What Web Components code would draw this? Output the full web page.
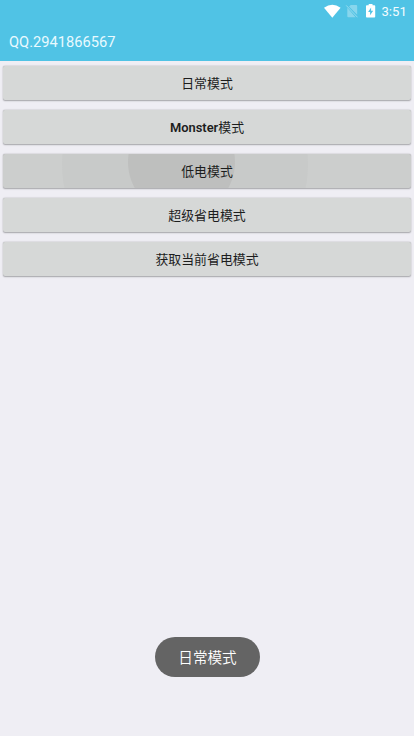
<!DOCTYPE html>
<html lang="zh-CN"><head><meta charset="utf-8"><title>QQ.2941866567</title>
<style>
html,body{margin:0;height:100%;overflow:hidden}
body{background:#efeef4;font-family:Roboto,"Noto Sans CJK SC",sans-serif}
</style></head><body>
<power-app></power-app>
<script>
const define=(name,html)=>customElements.define(name,class extends HTMLElement{
  constructor(){super();this.attachShadow({mode:'open'}).innerHTML=html;}
});
define('status-bar',`<style>
:host{display:flex;height:24px;box-sizing:border-box;justify-content:flex-end;align-items:center;padding-right:7.5px;color:#f4fcff;font-size:13.1px;line-height:24px}
svg{display:block;flex:none}.clock{margin-left:5.5px;width:25px;white-space:nowrap}
</style>
<svg width="52" height="24" viewBox="0 0 52 24">
<path d="M0 7.8Q8.3 1.6 16.6 7.8L8.3 17.8Z" fill="#fff"/>
<g fill="#fff" opacity=".32"><path d="M23.3 7.8V16.2Q23.3 17.2 24.3 17.2H31.6Z"/><path d="M26.8 5H32.2Q33.2 5 33.2 6V14.8L25 6.6Z"/></g>
<path d="M22.2 5.4L33.5 17.3" stroke="#fff" stroke-width=".9" opacity=".45"/>
<path d="M44.7 4H48.5V5.2H50.4Q51.2 5.2 51.2 6V16.7Q51.2 17.5 50.4 17.5H42.8Q42 17.5 42 16.7V6Q42 5.2 42.8 5.2H44.7Z" fill="#fff"/>
<path d="M47.1 7.4L44.1 12H46.1V15.3L49.2 10.7H47.1Z" fill="#50c3e5"/>
</svg><span class="clock">3:51</span>`);
define('title-bar',`<style>:host{display:flex;align-items:center;height:37px;box-sizing:border-box;padding:0 9px 1px;color:#e9faff;font-size:14.7px}</style><slot></slot>`);
define('mode-button',`<style>
:host{display:flex;box-sizing:border-box;height:34px;align-items:center;justify-content:center;background:#d6d8d7;border-radius:2px;box-shadow:0 .8px 1.5px rgba(0,0,0,.3),0 0 1px rgba(0,0,0,.12);color:#1c1d1d;font-size:12.9px;font-weight:400;line-height:18px;padding-top:1.6px}
:host([pressed]){background:radial-gradient(circle at 178.5px 8px,#bebfbe 53px,transparent 54px),radial-gradient(circle at 182px 10px,#c8cac9 122.5px,transparent 123.5px),#cccecd}
::slotted(b){font-weight:600}
</style><slot></slot>`);
define('toast-message',`<style>:host{display:flex;align-items:center;justify-content:center;width:105px;height:40px;border-radius:20px;background:#646464;color:#fff;font-size:14.6px;font-weight:350;line-height:20px;padding:2px 0 0 1px;box-sizing:border-box}</style><slot></slot>`);
define('power-app',`<style>
:host{display:flex;flex-direction:column;height:736px;width:414px;position:relative}
header{background:#50c3e5;height:61px;flex:none}
main{display:grid;gap:10.1px;padding:4.8px 3.4px 0}
toast-message{position:absolute;left:154.5px;top:637px}
</style>
<header><status-bar></status-bar><title-bar>QQ.2941866567</title-bar></header>
<main><mode-button>日常模式</mode-button><mode-button><b>Monster</b>模式</mode-button><mode-button pressed>低电模式</mode-button><mode-button>超级省电模式</mode-button><mode-button>获取当前省电模式</mode-button></main>
<toast-message>日常模式</toast-message>`);
</script></body></html>
